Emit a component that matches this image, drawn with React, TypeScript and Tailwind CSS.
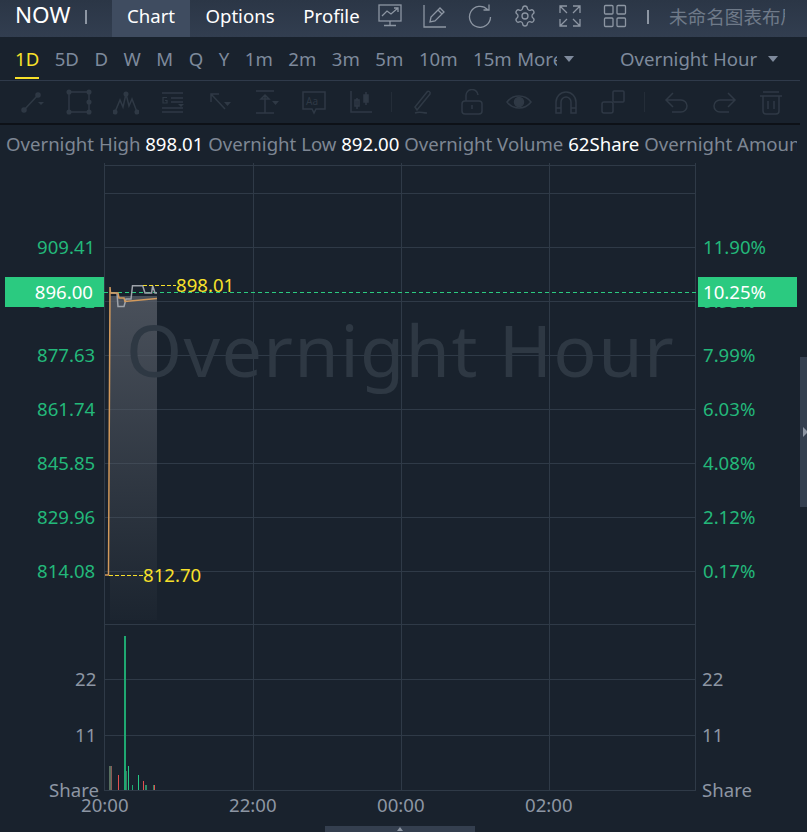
import { ReactNode } from "react";
import { Settings } from "lucide-react";

const periods = ["1D", "5D", "D", "W", "M", "Q", "Y", "1m", "2m", "3m", "5m", "10m", "15m"];
const leftPrices = [
  ["909.41", 247],
  ["893.52", 301],
  ["877.63", 355],
  ["861.74", 409],
  ["845.85", 463],
  ["829.96", 517],
  ["814.08", 571],
] as const;
const rightPcts = [
  ["11.90%", 247],
  ["9.95%", 301],
  ["7.99%", 355],
  ["6.03%", 409],
  ["4.08%", 463],
  ["2.12%", 517],
  ["0.17%", 571],
] as const;
const gridY = [165, 193, 247, 301, 355, 409, 463, 517, 571, 624, 679, 735, 790];
const gridX = [104, 253, 401, 549, 695];
// x, top, width, colour
const volumeBars: [number, number, number, string][] = [
  [109, 766, 2, "#56705f"],
  [111, 766, 1, "#8a5a56"],
  [118, 775, 1, "#e2504f"],
  [124, 636, 2, "#1fa871"],
  [126, 771, 1, "#3e7761"],
  [128, 766, 1, "#25c985"],
  [132, 785, 1, "#1fa871"],
  [138, 775, 1, "#25c985"],
  [143, 781, 1, "#e2504f"],
  [145, 785, 2, "#2f8c68"],
  [153, 785, 1, "#2f8c68"],
  [154, 785, 1, "#e2504f"],
];

function Label({ x, y, className, children }: { x: number; y: number; className: string; children: ReactNode }) {
  return (
    <span
      className={`absolute -translate-y-1/2 whitespace-nowrap leading-none ${className}`}
      style={{ left: x, top: y }}
    >
      {children}
    </span>
  );
}

function ToolIcon({ children }: { children: ReactNode }) {
  return (
    <div className="w-[47px] flex justify-center text-[#2f3945]">
      <svg width="26" height="26" viewBox="0 0 26 26" fill="none" stroke="currentColor" strokeWidth="1.5">
        {children}
      </svg>
    </div>
  );
}

function HeadIcon({ children }: { children: ReactNode }) {
  return (
    <svg width="24" height="24" viewBox="0 0 24 24" fill="none" stroke="currentColor" strokeWidth="1.3">
      {children}
    </svg>
  );
}

function Chart() {
  return (
    <div className="relative h-[669px] overflow-hidden">
      <svg className="absolute left-0 top-0" width="807" height="669" viewBox="0 163 807 669">
        {gridY.map((y) => (
          <line key={y} x1="104" x2="696" y1={y + 0.5} y2={y + 0.5} stroke="#2f3a47" />
        ))}
        {gridX.map((x) => (
          <line key={x} x1={x + 0.5} x2={x + 0.5} y1="163" y2="790" stroke="#2f3a47" />
        ))}
        <defs>
          <linearGradient id="area" x1="0" y1="0" x2="0" y2="1">
            <stop offset="0" stopColor="#5a606a" stopOpacity="0.75" />
            <stop offset="1" stopColor="#5a606a" stopOpacity="0.04" />
          </linearGradient>
        </defs>
        <path d="M110 296H157V620H110Z" fill="url(#area)" />
        <line x1="104" x2="696" y1="292.5" y2="292.5" stroke="#2bca80" strokeDasharray="4 3" />
        <path
          d="M111 293H117L118 306.5H124L126 299H131L132.5 285.7H142.7L145 293H151.6L152.7 285.7L155 293H157"
          fill="none"
          stroke="#9ea3aa"
          strokeWidth="1.5"
        />
        <path
          d="M105 575H108.5L110 287L110.5 293H118L119 298H124L125 301.5L157 298.5"
          fill="none"
          stroke="#d39a5c"
          strokeWidth="1.5"
        />
        <line x1="143" x2="176" y1="285.5" y2="285.5" stroke="#f7e02a" strokeDasharray="4 2" />
        <line x1="109" x2="143" y1="575.5" y2="575.5" stroke="#f7e02a" strokeDasharray="4 2" />
        {volumeBars.map(([x, top, w, color]) => (
          <rect key={x} x={x} y={top} width={w} height={790 - top} fill={color} />
        ))}
      </svg>

      <div className="absolute left-[126px] top-[150px] text-[72px] leading-none tracking-[1.3px] text-[#2e3843]">
        Overnight Hour
      </div>

      {leftPrices.map(([text, y]) => (
        <Label key={text} x={37} y={y - 163} className="text-[#23b87a]">
          {text}
        </Label>
      ))}
      {rightPcts.map(([text, y]) => (
        <Label key={text} x={703} y={y - 163} className="text-[#23b87a]">
          {text}
        </Label>
      ))}

      <Label x={176} y={122} className="text-[#f7e02a]">898.01</Label>
      <Label x={143} y={412} className="text-[#f7e02a]">812.70</Label>

      <div className="absolute left-[5px] top-[114px] w-[99px] h-[30px] bg-[#2bca80] text-white flex items-center justify-end pr-[11px]">
        896.00
      </div>
      <div className="absolute left-[698px] top-[114px] w-[99px] h-[30px] bg-[#2bca80] text-white flex items-center pl-[5px]">
        10.25%
      </div>

      <Label x={75} y={516} className="text-[#8d96a3]">22</Label>
      <Label x={75} y={572} className="text-[#8d96a3]">11</Label>
      <Label x={49} y={627} className="text-[#8d96a3]">Share</Label>
      <Label x={702} y={516} className="text-[#8d96a3]">22</Label>
      <Label x={702} y={572} className="text-[#8d96a3]">11</Label>
      <Label x={702} y={627} className="text-[#8d96a3]">Share</Label>

      <Label x={81} y={642} className="text-[#8d96a3]">20:00</Label>
      <Label x={229} y={642} className="text-[#8d96a3]">22:00</Label>
      <Label x={377} y={642} className="text-[#8d96a3]">00:00</Label>
      <Label x={525} y={642} className="text-[#8d96a3]">02:00</Label>

      <div className="absolute left-[800px] top-[194px] w-[7px] h-[150px] bg-[#343f4f]">
        <div className="absolute left-[3px] top-[70px] w-0 h-0 border-y-[5px] border-y-transparent border-l-[5px] border-l-[#8d96a3]" />
      </div>
      <div className="absolute left-[325px] top-[663px] w-[150px] h-[6px] bg-[#343f4f]">
        <div className="absolute left-[72px] top-[1px] w-0 h-0 border-x-[3px] border-x-transparent border-b-[4px] border-b-[#8d96a3]" />
      </div>
    </div>
  );
}

export default function App() {
  return (
    <div
      className="w-[807px] h-[832px] overflow-hidden bg-[#19222d] text-[18.6px]"
      style={{ fontFamily: '"Noto Sans", "Noto Sans CJK SC", sans-serif' }}
    >
      {/* top tabs */}
      <div className="h-[37px] bg-gradient-to-b from-[#2b3646] to-[#323e50] flex items-center text-white">
        <div className="w-[112px] flex items-center pl-[15px] pb-[6px]">
          <span className="text-[22.5px] leading-none">NOW</span>
          <span className="ml-[15px] mt-[2px] w-[2px] h-[14px] bg-[#8d96a3]" />
        </div>
        <div className="h-full w-[78px] bg-[#3f4c60] flex items-center justify-center pb-[6px]">Chart</div>
        <div className="w-[100px] text-center pb-[6px]">Options</div>
        <div className="w-[83px] text-center pb-[6px]">Profile</div>
        <div className="flex items-center gap-[21px] text-[#8d96a3] ml-[5px] pb-[6px]">
          <HeadIcon>
            <rect x="1" y="1" width="22" height="16" />
            <path d="M4 12L9 7L13 10L20 4M16 4H20V8M12 17V21M6 21.5H18" />
          </HeadIcon>
          <HeadIcon>
            <path d="M1 1V23H23M7 18L8 13L17 4L21 8L12 17ZM15 6L19 10" />
          </HeadIcon>
          <HeadIcon>
            <path d="M19.5 5.5A10.5 10.5 0 1 0 22.5 13M21 0.5V6H15.5" />
          </HeadIcon>
          <Settings size={24} strokeWidth={1.3} />
          <HeadIcon>
            <path d="M2 9V2H9M2 2L9 9M15 2H22V9M22 2L15 9M2 15V22H9M2 22L9 15M22 15V22H15M22 22L15 15" />
          </HeadIcon>
          <HeadIcon>
            <rect x="1.5" y="1.5" width="8.5" height="8.5" rx="1" />
            <rect x="14" y="1.5" width="8.5" height="8.5" rx="1" />
            <rect x="1.5" y="14" width="8.5" height="8.5" rx="1" />
            <rect x="14" y="14" width="8.5" height="8.5" rx="1" />
          </HeadIcon>
        </div>
        <span className="ml-[20px] mb-[3px] w-[2px] h-[14px] bg-[#8d96a3]" />
        <div className="ml-[20px] w-[116px] overflow-hidden whitespace-nowrap text-[#6f7a89] pb-[3px]">
          未命名图表布局
        </div>
      </div>

      {/* periods */}
      <div className="h-[44px] border-b border-[#2f3a4a] mr-[7px] pt-[1px] flex items-center text-[#7e8a9c] relative">
        <div className="flex items-center pl-[15px] gap-[15.5px]">
          {periods.map((p, i) => (
            <span key={p} className={i === 0 ? "text-[#f7e02a] relative" : ""}>
              {p}
              {i === 0 && (
                <span className="absolute left-0 right-0 top-[32px] h-[2px] bg-[#f7e02a]" />
              )}
            </span>
          ))}
          <span className="flex items-center w-[68px] -ml-[10px]">
            <span className="w-[40px] overflow-hidden">More</span>
            <span className="ml-[7px] w-0 h-0 border-x-[5px] border-x-transparent border-t-[6px] border-t-[#7e8a9c]" />
          </span>
        </div>
        <div className="absolute left-[620px] flex items-center">
          <span>Overnight Hour</span>
          <span className="ml-[11px] w-0 h-0 border-x-[5px] border-x-transparent border-t-[6px] border-t-[#7e8a9c]" />
        </div>
      </div>

      {/* drawing tools, disabled */}
      <div className="h-[44px] border-b-2 border-[#0d1117] mr-[7px] flex items-center pl-[8px]">
        <ToolIcon>
          <path d="M5 21L19 6" />
          <circle cx="5" cy="21" r="2" fill="currentColor" />
          <circle cx="19" cy="6" r="2" fill="currentColor" />
          <path d="M19 13H25L22 16Z" fill="currentColor" stroke="none" />
        </ToolIcon>
        <ToolIcon>
          <rect x="3" y="3" width="20" height="20" />
          <circle cx="3" cy="3" r="1.8" fill="currentColor" />
          <circle cx="23" cy="3" r="1.8" fill="currentColor" />
          <circle cx="3" cy="23" r="1.8" fill="currentColor" />
          <circle cx="23" cy="23" r="1.8" fill="currentColor" />
          <circle cx="23" cy="13" r="1.8" fill="currentColor" />
        </ToolIcon>
        <ToolIcon>
          <path d="M2 23L7 11L10 18L13 5L16 17L19 10L24 23" />
          <circle cx="2" cy="23" r="1.8" fill="currentColor" />
          <circle cx="13" cy="5" r="1.8" fill="currentColor" />
          <circle cx="24" cy="23" r="1.8" fill="currentColor" />
        </ToolIcon>
        <ToolIcon>
          <path d="M2 4H23M11 9H23M11 13H23M2 19H23M2 23H23" />
          <path d="M7 8.5H3V14H7V11.5H5" strokeWidth="1.2" />
          <path d="M18 15H24L21 18Z" fill="currentColor" stroke="none" />
        </ToolIcon>
        <ToolIcon>
          <path d="M18 20L4 5M4 13V5H12" />
          <path d="M17 13H24L20.5 17Z" fill="currentColor" stroke="none" />
        </ToolIcon>
        <ToolIcon>
          <path d="M2 2H20M2 24H20M11 6V24M7 10L11 6L15 10Z" />
          <path d="M18 12H25L21.5 16Z" fill="currentColor" stroke="none" />
        </ToolIcon>
        <ToolIcon>
          <path d="M2 3H24V20H15L13 24L11 20H2Z" />
          <text x="5" y="16" fontSize="10" fill="currentColor" stroke="none">Aa</text>
        </ToolIcon>
        <ToolIcon>
          <path d="M3 2V23H24M9 9V20M18 3V16" />
          <rect x="7" y="11" width="4" height="6" />
          <rect x="16" y="6" width="4" height="7" fill="currentColor" />
        </ToolIcon>
        <span className="ml-[7px] mr-[9px] w-px h-5 bg-[#242d38]" />
        <ToolIcon>
          <path d="M3 18L5 21L18 5C19 3 16 1 15 3L3 18ZM3 24C8 22 10 24 15 24" />
        </ToolIcon>
        <ToolIcon>
          <rect x="3" y="12" width="20" height="13" rx="3" />
          <path d="M7 12V7A6 6 0 0 1 19 6M13 16V20" />
        </ToolIcon>
        <ToolIcon>
          <path d="M1 13C7 5 19 5 25 13C19 21 7 21 1 13Z" />
          <circle cx="13" cy="13" r="4.5" fill="currentColor" />
        </ToolIcon>
        <ToolIcon>
          <path d="M3 24V13A10 10 0 0 1 23 13V24H18V13A5 5 0 0 0 8 13V24ZM3 19H8M18 19H23" />
        </ToolIcon>
        <ToolIcon>
          <rect x="2" y="13" width="11" height="11" rx="2" />
          <rect x="13" y="2" width="11" height="11" rx="1" />
        </ToolIcon>
        <span className="ml-[8px] mr-[8px] w-px h-5 bg-[#242d38]" />
        <ToolIcon>
          <path d="M9 4L2 11L9 18M2 11H17A6 6 0 0 1 17 23H8" />
        </ToolIcon>
        <ToolIcon>
          <path d="M17 4L24 11L17 18M24 11H9A6 6 0 0 0 9 23H18" />
        </ToolIcon>
        <ToolIcon>
          <path d="M5 3H21M2 7H24M5 7V22A3 3 0 0 0 8 25H18A3 3 0 0 0 21 22V7M10 12V20M16 12V20" />
        </ToolIcon>
      </div>

      {/* overnight stats */}
      <div className="h-[38px] flex items-center pl-[6px]">
        <div className="w-[791px] overflow-hidden whitespace-nowrap text-[#7e8794]">
          Overnight High&nbsp;<span className="text-white">898.01</span>&nbsp;Overnight Low&nbsp;<span className="text-white">892.00</span>&nbsp;Overnight Volume&nbsp;<span className="text-white">62Share</span>&nbsp;Overnight Amount
        </div>
      </div>

      <Chart />
    </div>
  );
}
